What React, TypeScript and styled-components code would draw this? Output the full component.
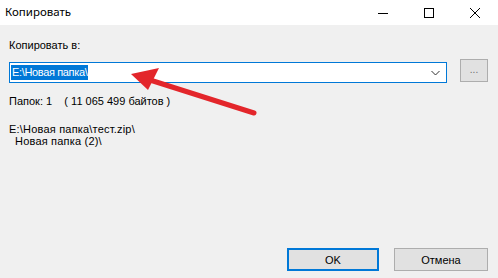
import React from "react";
import styled, { createGlobalStyle } from "styled-components";

const Global = createGlobalStyle`
  html, body { margin: 0; padding: 0; background: #f0f0f0; }
  #root { width: 498px; height: 278px; }
`;

const Window = styled.div`
  position: relative;
  width: 498px;
  height: 278px;
  display: flex;
  flex-direction: column;
  background: #f0f0f0;
  overflow: hidden;
  font-family: "Liberation Sans", Arial, sans-serif;
  font-size: 11px;
  color: #000;
`;

const TitleBar = styled.div`
  height: 25px;
  background: #fff;
  display: flex;
  align-items: center;
  flex-shrink: 0;
`;

const Title = styled.div`
  flex: 1;
  padding-left: 5px;
  font-family: "Noto Sans", "Open Sans", sans-serif;
  font-size: 11.5px;
  color: #000;
  margin-top: -2px;
`;

const CaptionButton = styled.div`
  width: 46px;
  height: 25px;
  display: flex;
  align-items: center;
  justify-content: center;
`;

const Body = styled.div`
  flex: 1;
  display: flex;
  flex-direction: column;
  padding: 14px 10px 7px 9px;
`;

const Label = styled.div`
  height: 13px;
  line-height: 13px;
`;

const PathRow = styled.div`
  display: flex;
  align-items: flex-start;
  margin-top: 7px;
  gap: 13px;
`;

const Combo = styled.div`
  width: 438px;
  height: 21px;
  box-sizing: border-box;
  margin-top: 3px;
  border: 1px solid #0078d7;
  background: #fff;
  display: flex;
  align-items: center;
  padding-left: 1px;
`;

const Selected = styled.span`
  background: #0078d7;
  color: #fff;
  height: 15px;
  line-height: 15px;
  padding: 0 1px;
  letter-spacing: -0.35px;
`;

const ComboSpacer = styled.div`
  flex: 1;
`;

const Chevron = styled.div`
  width: 17px;
  display: flex;
  align-items: center;
  justify-content: center;
  margin-right: 2px;
`;

const BrowseButton = styled.div`
  width: 28px;
  height: 23px;
  box-sizing: border-box;
  border: 1px solid #adadad;
  background: #e1e1e1;
  display: flex;
  align-items: center;
  justify-content: center;
  color: #6d6d6d;
  font-size: 10px;
  padding-bottom: 2px;
`;

const InfoLine = styled.div`
  margin-top: 12px;
  height: 13px;
  line-height: 13px;
  white-space: pre;
`;

const PathList = styled.div`
  margin-top: 15px;
  display: flex;
  flex-direction: column;
`;

const PathLine = styled.div<{ $indent?: number }>`
  height: 12px;
  line-height: 12px;
  padding-left: ${(p) => p.$indent ?? 0}px;
  white-space: pre;
  letter-spacing: 0.2px;
`;

const Footer = styled.div`
  margin-top: auto;
  display: flex;
  justify-content: flex-end;
  gap: 15px;
`;

const Button = styled.div<{ $primary?: boolean; $w: number }>`
  width: ${(p) => p.$w}px;
  height: 23px;
  box-sizing: border-box;
  border: ${(p) => (p.$primary ? "2px solid #0078d7" : "1px solid #adadad")};
  background: #e1e1e1;
  display: flex;
  align-items: center;
  justify-content: center;
  font-size: 11px;
`;

const ArrowLayer = styled.svg`
  position: absolute;
  left: 0;
  top: 0;
  pointer-events: none;
`;

export default function App() {
  return (
    <>
      <Global />
      <Window>
        <TitleBar>
          <Title>Копировать</Title>
          <CaptionButton>
            <svg width="12" height="12" viewBox="0 0 12 12">
              <line x1="1" y1="6.5" x2="11" y2="6.5" stroke="#000" strokeWidth="1" />
            </svg>
          </CaptionButton>
          <CaptionButton>
            <svg width="12" height="12" viewBox="0 0 12 12">
              <rect x="1.5" y="1.5" width="9" height="9" fill="none" stroke="#000" strokeWidth="1" />
            </svg>
          </CaptionButton>
          <CaptionButton>
            <svg width="12" height="12" viewBox="0 0 12 12">
              <path d="M1 1 L11 11 M11 1 L1 11" stroke="#000" strokeWidth="1" />
            </svg>
          </CaptionButton>
        </TitleBar>
        <Body>
          <Label>Копировать в:</Label>
          <PathRow>
            <Combo>
              <Selected>E:\Новая папка\</Selected>
              <ComboSpacer />
              <Chevron>
                <svg width="9" height="6" viewBox="0 0 9 6">
                  <path d="M0.5 1 L4.5 5 L8.5 1" fill="none" stroke="#333" strokeWidth="1" />
                </svg>
              </Chevron>
            </Combo>
            <BrowseButton>...</BrowseButton>
          </PathRow>
          <InfoLine>{"Папок: 1    ( 11 065 499 байтов )"}</InfoLine>
          <PathList>
            <PathLine>E:\Новая папка\тест.zip\</PathLine>
            <PathLine $indent={6}>Новая папка (2)\</PathLine>
          </PathList>
          <Footer>
            <Button $primary $w={92}>OK</Button>
            <Button $w={94}>Отмена</Button>
          </Footer>
        </Body>
        <ArrowLayer width="498" height="278" viewBox="0 0 498 278">
          <line x1="254" y1="113" x2="150" y2="80" stroke="#e3262b" strokeWidth="5" strokeLinecap="round" />
          <polygon points="131,74 159,68 148,90" fill="#e3262b" />
        </ArrowLayer>
      </Window>
    </>
  );
}
